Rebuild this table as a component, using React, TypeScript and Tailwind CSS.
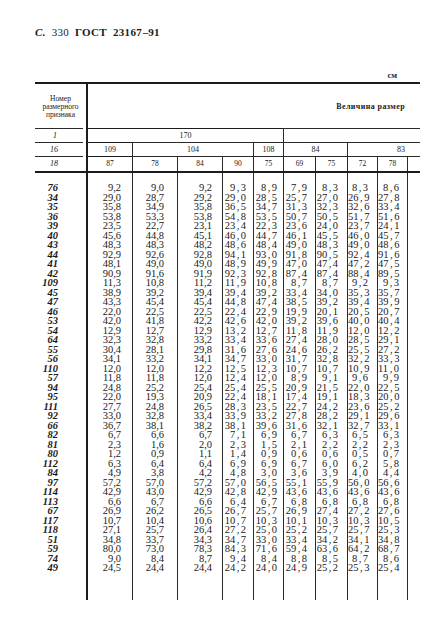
import React from "react";

const labels = ["76","34","35","36","39","40","43","44","41","42","109","45","47","46","53","54","64","55","56","110","57","94","95","111","92","66","82","81","80","112","84","97","114","113","67","117","118","51","59","74","49"];

const rows: string[] = [
"9,2 9,0 9,2 9,3 8,9 7,9 8,3 8,3 8,6",
"29,0 28,7 29,2 29,0 28,5 25,7 27,0 26,9 27,8",
"35,8 34,9 35,8 36,5 34,7 31,3 32,3 32,6 33,4",
"53,8 53,3 53,8 54,8 53,5 50,7 50,5 51,7 51,6",
"23,5 22,7 23,1 23,4 22,3 23,6 24,0 23,7 24,1",
"45,6 44,8 45,1 46,0 44,7 46,1 45,5 46,0 45,7",
"48,3 48,3 48,2 48,6 48,4 49,0 48,3 49,0 48,6",
"92,9 92,6 92,8 94,1 93,0 91,8 90,5 92,4 91,6",
"48,1 49,0 49,0 48,9 49,9 47,0 47,4 47,2 47,5",
"90,9 91,6 91,9 92,3 92,8 87,4 87,4 88,4 89,5",
"11,3 10,8 11,2 11,9 10,8 8,7 8,7 9,2 9,3",
"38,9 39,2 39,4 39,4 39,2 33,4 34,0 35,3 35,7",
"43,3 45,4 45,4 44,8 47,4 38,5 39,2 39,4 39,9",
"22,0 22,5 22,5 22,4 22,9 19,9 20,1 20,5 20,7",
"42,0 41,8 42,2 42,6 42,0 39,2 39,6 40,0 40,4",
"12,9 12,7 12,9 13,2 12,7 11,8 11,9 12,0 12,2",
"32,3 32,8 33,2 33,4 33,6 27,4 28,0 28,5 29,1",
"30,4 28,1 29,8 31,6 27,6 24,6 26,2 25,5 27,2",
"34,1 33,2 34,1 34,7 33,0 31,7 32,8 32,2 33,3",
"12,0 12,0 12,2 12,5 12,3 10,7 10,7 10,9 11,0",
"11,8 11,8 12,0 12,4 12,0 8,9 9,1 9,6 9,9",
"24,8 25,2 25,4 25,4 25,5 20,9 21,5 22,0 22,5",
"22,0 19,3 20,9 22,4 18,1 17,4 19,1 18,3 20,0",
"27,7 24,8 26,5 28,3 23,5 22,7 24,2 23,6 25,2",
"33,0 32,8 33,4 33,9 33,2 27,8 28,2 29,1 29,6",
"36,7 38,1 38,2 38,1 39,6 31,6 32,1 32,7 33,1",
"6,7 6,6 6,7 7,1 6,9 6,7 6,3 6,5 6,3",
"2,3 1,6 2,0 2,3 1,5 2,1 2,2 2,2 2,3",
"1,2 0,9 1,1 1,4 0,9 0,6 0,6 0,5 0,7",
"6,3 6,4 6,4 6,9 6,9 6,7 6,0 6,2 5,8",
"4,9 3,8 4,2 4,8 3,0 3,6 3,9 4,0 4,4",
"57,2 57,0 57,2 57,0 56,5 55,1 55,9 56,0 56,6",
"42,9 43,0 42,9 42,8 42,9 43,6 43,6 43,6 43,6",
"6,6 6,7 6,6 6,4 6,7 6,8 6,8 6,8 6,8",
"26,9 26,2 26,5 26,7 25,7 26,9 27,4 27,2 27,6",
"10,7 10,4 10,6 10,7 10,3 10,1 10,3 10,3 10,5",
"27,1 25,7 26,4 27,2 25,0 25,2 25,7 25,7 25,3",
"34,8 33,7 34,3 34,7 33,0 33,4 34,2 34,1 34,8",
"80,0 73,0 78,3 84,3 71,6 59,4 63,6 64,2 68,7",
"9,0 8,4 8,7 9,4 8,4 8,8 8,5 8,7 8,6",
"24,5 24,4 24,4 24,2 24,0 24,9 25,2 25,3 25,4",
];

const data = rows.map((r) => r.split(" "));

const colClasses = [
  "border-l-2 border-[#1c1c1c] pr-[11px]",
  "border-l border-[#2a2a2a] pr-[13px]",
  "border-l border-[#2a2a2a] pr-[10px]",
  "border-l border-[#2a2a2a] pr-[7px]",
  "border-l border-[#2a2a2a] pr-[6px]",
  "border-l border-[#2a2a2a] pr-[8px]",
  "border-l border-[#2a2a2a] pr-[9px]",
  "border-l border-[#2a2a2a] pr-[9px]",
  "border-l border-[#2a2a2a] pr-[8px]",
];

const grid = "grid grid-cols-[51px_46px_45px_45px_31px_30px_32px_32px_30px_30px_13px]";

function Val({ v, spaced }: { v: string; spaced: boolean }) {
  if (!spaced) return <>{v}</>;
  const [a, b] = v.split(",");
  return (
    <>
      {a}
      <span className="mx-[1.5px]">,</span>
      {b}
    </>
  );
}

export default function App() {
  const serif = { fontFamily: '"Liberation Serif", "DejaVu Serif", serif' };
  return (
    <div className="w-[425px] h-[633px] bg-white text-[#1a1a1a] overflow-hidden" style={serif}>
      <div className="pl-[35px] pt-[26px]">
        <div className="text-[11px] leading-[12px] font-bold flex gap-[6px] tracking-[0.3px]">
          <span className="italic">С.</span>
          <span className="font-normal">330</span>
          <span>ГОСТ</span>
          <span>
            23167<span className="inline-block scale-x-50 -mx-[2.5px]">—</span>91
          </span>
        </div>
        <div className="w-[385px] mt-[32px] flex justify-end pr-[23px] text-[8.5px] leading-[10px] font-bold">
          см
        </div>
        <div className="w-[385px] mt-[2px] border-t-2 border-[#1c1c1c]">
          <div className={grid}>
            <div className="h-[44px] flex items-center justify-center text-center text-[7.5px] leading-[8px] pt-[2px]">
              <div>
                Номер
                <br />
                размерного
                <br />
                признака
              </div>
            </div>
            <div className="col-span-10 h-[44px] border-l-2 border-[#1c1c1c] flex items-center justify-end pr-[15px] pt-[2px] text-[8px] font-bold tracking-[0.4px]">
              Величина размер
            </div>

            <div className="h-[14px] border-t border-[#2a2a2a] mr-[3px] flex items-center justify-end pr-[26px] text-[8px] italic">
              1
            </div>
            <div className="col-span-5 h-[14px] border-l-2 border-t border-[#1c1c1c] flex items-center justify-center text-[8px]">
              170
            </div>
            <div className="col-span-5 h-[14px] border-l border-t border-[#2a2a2a]"></div>

            <div className="h-[14px] border-t border-[#2a2a2a] mr-[3px] flex items-center justify-end pr-[25px] text-[8px] italic">
              16
            </div>
            <div className="h-[14px] border-l-2 border-t border-[#1c1c1c] flex items-center justify-center text-[8px]">
              109
            </div>
            <div className="col-span-3 h-[14px] border-l border-t border-[#2a2a2a] flex items-center justify-center text-[8px]">
              104
            </div>
            <div className="h-[14px] border-l border-t border-[#2a2a2a] flex items-center justify-center text-[8px]">
              108
            </div>
            <div className="col-span-2 h-[14px] border-l border-t border-[#2a2a2a] flex items-center justify-center text-[8px]">
              84
            </div>
            <div className="col-span-3 h-[14px] border-l border-t border-[#2a2a2a] flex items-center justify-end pr-[15px] text-[8px]">
              83
            </div>

            <div className="h-[15px] border-t border-[#2a2a2a] mr-[3px] flex items-center justify-end pr-[25px] text-[8px] italic">
              18
            </div>
            {["87", "78", "84", "90", "75", "69", "75", "72", "78"].map((h, i) => (
              <div
                key={i}
                className={
                  (i === 0 ? "border-l-2 border-[#1c1c1c] " : "border-l border-[#2a2a2a] ") +
                  "h-[15px] border-t flex items-center justify-center text-[7.5px]"
                }
              >
                {h}
              </div>
            ))}
            <div className="h-[15px] border-l border-t border-[#2a2a2a]"></div>
          </div>

          <div className={grid + " border-t-2 border-[#1c1c1c]"}>
            <div className="h-[427px] pt-[10px] pr-[28px] text-right text-[10.5px] leading-[9.5px] italic font-bold">
              {labels.map((l, i) => (
                <div key={i}>{l}</div>
              ))}
            </div>
            {colClasses.map((cls, c) => (
              <div key={c} className={cls + " h-[427px] pt-[10px] text-right text-[10.5px] leading-[9.5px]"}>
                {data.map((r, i) => (
                  <div key={i}>
                    <Val v={r[c]} spaced={c >= 3} />
                  </div>
                ))}
              </div>
            ))}
            <div className="h-[427px] border-l border-[#2a2a2a]"></div>
          </div>
        </div>
      </div>
    </div>
  );
}
